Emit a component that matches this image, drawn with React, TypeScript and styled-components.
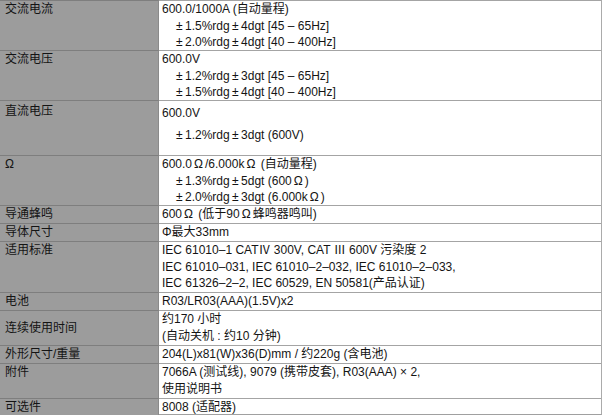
import React from "react";
import styled, { createGlobalStyle } from "styled-components";

const GlobalStyle = createGlobalStyle`
  html, body {
    margin: 0;
    padding: 0;
    background: #fff;
  }
  body {
    font-family: "Liberation Sans", "Noto Sans CJK SC", sans-serif;
    font-size: 12px;
    color: #141414;
  }
`;

const Table = styled.div`
  width: 601px;
  border-right: 1px solid #ababab;
  border-bottom: 1px solid #a0a0a0;
  background: #fff;
`;

const Row = styled.div<{ h: number }>`
  display: grid;
  grid-template-columns: 159px 1fr;
  height: ${(p) => p.h}px;
  box-sizing: border-box;
`;

const Label = styled.div<{ center?: boolean; spread?: boolean }>`
  background: #9c9c9c;
  border-top: 1px solid #7e7e7e;
  border-right: 1px solid #8a8a8a;
  padding: ${(p) => (p.spread ? "2px 0 0 5px" : "0 0 0 5px")};
  line-height: 16.5px;
  display: flex;
  align-items: ${(p) => (p.center ? "center" : "flex-start")};
`;

const Value = styled.div<{ spread?: boolean }>`
  border-top: 1px solid #a4a4a4;
  padding: ${(p) => (p.spread ? "4px 0 0 3px" : "0 0 0 3px")};
  display: flex;
  flex-direction: column;
  gap: ${(p) => (p.spread ? "5px" : "0")};
  line-height: 16.5px;
  white-space: nowrap;
`;

const Line = styled.div<{ indent?: boolean }>`
  padding-left: ${(p) => (p.indent ? "14px" : "0")};
`;

const Ohm = styled.span`
  padding: 0 2px;
`;

const pm = "±\u2009";
const sp = "\u2009±\u2009";

type Spec = {
  label: React.ReactNode;
  h: number;
  center?: boolean;
  spread?: boolean;
  lines: { t: React.ReactNode; indent?: boolean }[];
};

const O = () => <Ohm>Ω</Ohm>;

const rows: Spec[] = [
  {
    label: "交流电流",
    h: 50,
    lines: [
      { t: "600.0/1000A (自动量程)" },
      { t: `${pm}1.5%rdg${sp}4dgt [45 – 65Hz]`, indent: true },
      { t: `${pm}2.0%rdg${sp}4dgt [40 – 400Hz]`, indent: true },
    ],
  },
  {
    label: "交流电压",
    h: 50,
    lines: [
      { t: "600.0V" },
      { t: `${pm}1.2%rdg${sp}3dgt [45 – 65Hz]`, indent: true },
      { t: `${pm}1.5%rdg${sp}4dgt [40 – 400Hz]`, indent: true },
    ],
  },
  {
    label: "直流电压",
    h: 55,
    spread: true,
    lines: [
      { t: "600.0V" },
      { t: `${pm}1.2%rdg${sp}3dgt (600V)`, indent: true },
    ],
  },
  {
    label: "Ω",
    h: 50,
    lines: [
      {
        t: (
          <>
            600.0
            <O />
            /6.000k
            <O /> (自动量程)
          </>
        ),
      },
      {
        t: (
          <>
            {`${pm}1.3%rdg${sp}5dgt (600`}
            <O />)
          </>
        ),
        indent: true,
      },
      {
        t: (
          <>
            {`${pm}2.0%rdg${sp}3dgt (6.000k`}
            <O />)
          </>
        ),
        indent: true,
      },
    ],
  },
  {
    label: "导通蜂鸣",
    h: 18,
    lines: [
      {
        t: (
          <>
            600
            <O /> (低于90
            <O />
            蜂鸣器鸣叫)
          </>
        ),
      },
    ],
  },
  { label: "导体尺寸", h: 18, lines: [{ t: "Φ最大33mm" }] },
  {
    label: "适用标准",
    h: 51,
    lines: [
      { t: "IEC 61010–1 CATⅣ 300V, CAT Ⅲ 600V 污染度 2" },
      { t: "IEC 61010–031, IEC 61010–2–032, IEC 61010–2–033," },
      { t: "IEC 61326–2–2, IEC 60529, EN 50581(产品认证)" },
    ],
  },
  { label: "电池", h: 18, lines: [{ t: "R03/LR03(AAA)(1.5V)x2" }] },
  {
    label: "连续使用时间",
    h: 35,
    center: true,
    lines: [{ t: "约170 小时" }, { t: "(自动关机 : 约10 分钟)" }],
  },
  {
    label: "外形尺寸/重量",
    h: 18,
    lines: [{ t: "204(L)x81(W)x36(D)mm / 约220g (含电池)" }],
  },
  {
    label: "附件",
    h: 35,
    lines: [
      { t: "7066A (测试线), 9079 (携带皮套), R03(AAA) × 2," },
      { t: "使用说明书" },
    ],
  },
  { label: "可选件", h: 16, lines: [{ t: "8008 (适配器)" }] },
];

export default function App() {
  return (
    <>
      <GlobalStyle />
      <Table>
        {rows.map((r, i) => (
          <Row key={i} h={r.h}>
            <Label center={r.center} spread={r.spread}>
              {r.label}
            </Label>
            <Value spread={r.spread}>
              {r.lines.map((l, j) => (
                <Line key={j} indent={l.indent}>
                  {l.t}
                </Line>
              ))}
            </Value>
          </Row>
        ))}
      </Table>
    </>
  );
}
